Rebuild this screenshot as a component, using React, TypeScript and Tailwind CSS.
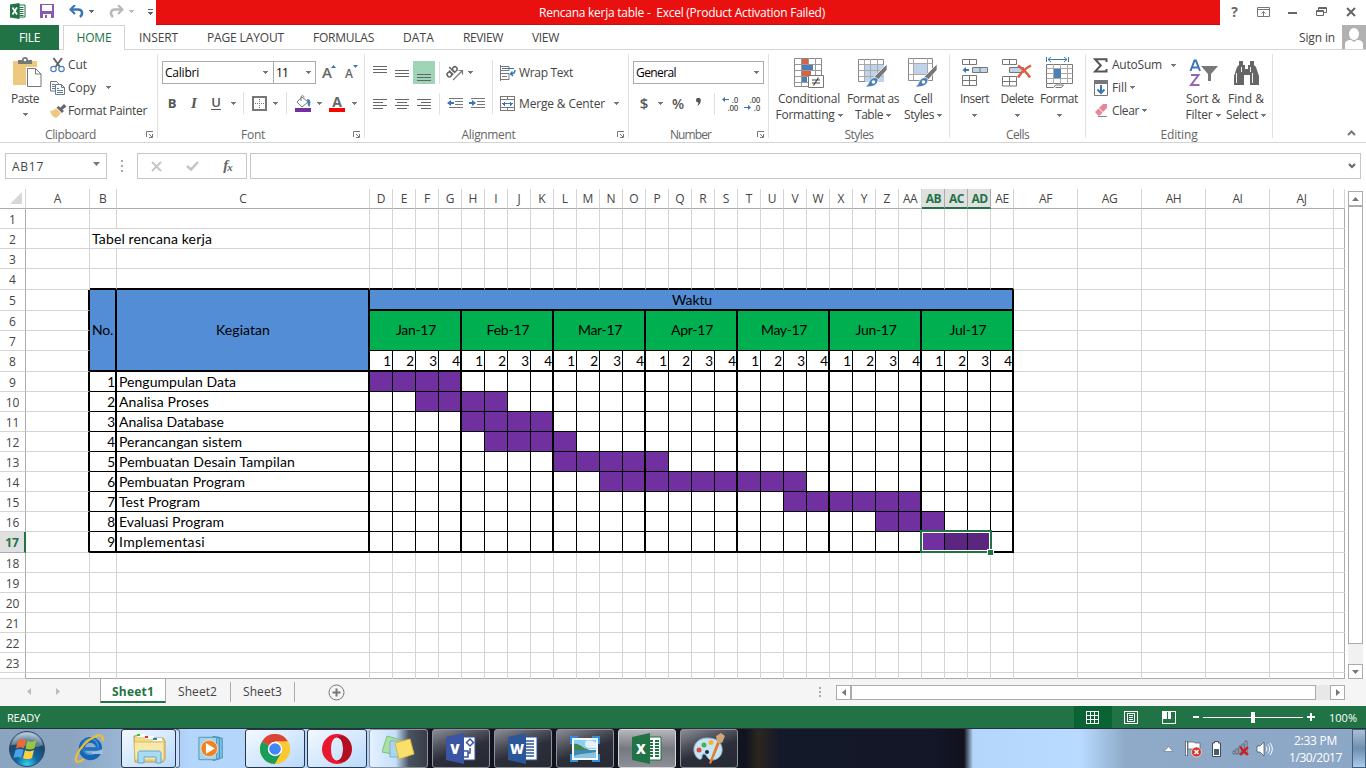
import React, { useLayoutEffect, useRef } from "react";

/* ---------- helpers ---------- */

function Fit({ w, children, className = "" }: { w: number; children: string; className?: string }) {
  const ref = useRef<HTMLSpanElement>(null);
  useLayoutEffect(() => {
    const el = ref.current;
    if (!el) return;
    el.style.letterSpacing = "0px";
    const natural = el.getBoundingClientRect().width;
    el.style.letterSpacing = `${(w - natural) / children.length}px`;
  }, [w, children]);
  return (
    <span ref={ref} className={`inline-block whitespace-pre ${className}`}>
      {children}
    </span>
  );
}

const Arrow = ({ className = "text-[#777]" }: { className?: string }) => (
  <svg width="5" height="3" viewBox="0 0 5 3" className={`shrink-0 ${className}`} shapeRendering="crispEdges">
    <path d="M0 0h5v1h-1v1h-1v1h-1v-1h-1v-1h-1z" fill="currentColor" />
  </svg>
);

const Slot = ({ className, children }: { className: string; children?: React.ReactNode }) => (
  <div className={`flex h-full shrink-0 items-center justify-center ${className}`}>{children}</div>
);

const Sep = ({ className = "h-[22px]" }: { className?: string }) => <div className={`w-px bg-[#e1e1e1] ${className}`} />;

const Launcher = () => (
  <svg width="8" height="7" viewBox="0 0 8 7" className="mr-[3px] shrink-0" fill="none" stroke="#777">
    <path d="M.5 6V.5H7M3 3l3 3M6.5 3v3.5H3" />
  </svg>
);

function Group({ width, label, lw, launcher, children }: { width: string; label: string; lw: number; launcher?: boolean; children: React.ReactNode }) {
  return (
    <div className={`flex h-[84px] shrink-0 flex-col border-r border-[#e1e1e1] ${width}`}>
      <div className="h-[72px] shrink-0">{children}</div>
      <div className="flex h-[16px] shrink-0 items-center text-[#666]">
        <div className={`flex flex-1 justify-center pt-px ${launcher ? "pr-[5px]" : ""}`}>
          <Fit w={lw}>{label}</Fit>
        </div>
        {launcher && <Launcher />}
      </div>
    </div>
  );
}

function Big({ width, icon, a, aw, b, bw }: { width: string; icon: React.ReactNode; a: string; aw: number; b?: string; bw?: number }) {
  return (
    <div className={`flex flex-col items-center ${width}`}>
      <div className="flex h-[37px] items-center">{icon}</div>
      <div className="flex h-4 items-center">
        <Fit w={aw}>{a}</Fit>
      </div>
      <div className="flex h-4 items-center gap-[3px]">
        {b && <Fit w={bw || 0}>{b}</Fit>}
        <Arrow />
      </div>
    </div>
  );
}

/* ---------- ribbon icons ---------- */

const lines = (ys: [number, number, number][]) => (
  <svg width="14" height="14" viewBox="0 0 14 14" fill="#666" shapeRendering="crispEdges">
    {ys.map(([x, y, w]) => (
      <rect key={y} x={x} y={y} width={w} height="1" />
    ))}
  </svg>
);

const ExcelLogo = () => (
  <svg width="16" height="16" viewBox="0 0 16 16">
    <path d="M9 2h6v12H9z" fill="#fff" stroke="#217346" />
    <path d="M9.500 4.500h4M9.500 6.500h4M9.500 8.500h4M9.500 10.500h4M9.500 12.500h4" stroke="#217346" strokeWidth="1" />
    <path d="M0 1.500 9.500 0v16L0 14.500z" fill="#217346" />
    <path d="m2.500 4.500 4.500 7M7 4.500l-4.500 7" stroke="#fff" strokeWidth="1.700" />
  </svg>
);

const PasteIcon = () => (
  <svg width="29" height="31" viewBox="0 0 29 31">
    <path d="M0 4h24v24H0z" fill="#edc87e" />
    <path d="M5 7V3h4a3 3 0 0 1 6 0h4v4z" fill="#777" />
    <circle cx="12" cy="3" r="1.300" fill="#fff" />
    <path d="M14.500 11.500h8l5.500 5.500v12.500H14.500z" fill="#fff" stroke="#fff" strokeWidth="3" />
    <path d="M14.500 11.500h8l5.500 5.500v12.500H14.500z" fill="#fff" stroke="#777" />
    <path d="M22.500 11.500v5.500H28" fill="none" stroke="#777" />
  </svg>
);

const CutIcon = () => (
  <svg width="16" height="16" viewBox="0 0 16 16" fill="none">
    <path d="M3.500 1 10 10M12 1 5.500 10" stroke="#666" strokeWidth="2" />
    <circle cx="3.500" cy="12" r="2.700" stroke="#4a7fb8" strokeWidth="1.200" />
    <circle cx="11.500" cy="12" r="2.700" stroke="#4a7fb8" strokeWidth="1.200" />
  </svg>
);

const CopyIcon = () => (
  <svg width="16" height="16" viewBox="0 0 16 16" fill="#fff" stroke="#777">
    <path d="M.5 1.500h6l2 2V11H.5z" />
    <path d="M2 4.500h3M2 6.500h3M2 8.500h3" stroke="#4a7fb8" />
    <path d="M5.500 4.500h6l3 3v7h-9z" />
    <path d="M11.500 4.500v3h3" fill="none" />
    <path d="M7 8.500h2M7 10.500h6M7 12.500h6" stroke="#4a7fb8" />
  </svg>
);

const PainterIcon = () => (
  <svg width="17" height="14" viewBox="0 0 17 14">
    <path d="M0 7c3 0 5-2 6-3l5 5c-2 2-3 4-5 5-3-1-5-3-6-7z" fill="#edc87e" />
    <path d="m6.500 3.500 2-1.500 5.500 5-2 2z" fill="#666" />
    <path d="m10 4 4-4 2.500 2.500L12 6z" fill="#666" />
  </svg>
);

const BorderIcon = () => (
  <svg width="15" height="15" viewBox="0 0 15 15" fill="none" shapeRendering="crispEdges">
    <rect x="1" y="1" width="13" height="13" stroke="#777" strokeWidth="2" />
    <path d="M7.500 3v10M3 7.500h10" stroke="#777" strokeDasharray="1 1" />
  </svg>
);

const BucketIcon = () => (
  <svg width="17" height="17" viewBox="0 0 17 17">
    <path d="M7 2 2 7l5 5 6-5z" fill="#fff" stroke="#777" />
    <path d="M6 6V2.500C6 0 9 0 9 2.500" fill="none" stroke="#777" />
    <path d="M12 4c4 0 4 3 2.500 8-2-1-2-4-2.500-8z" fill="#4a7fb8" />
    <path d="M0 13h16v4H0z" fill="#7030a0" />
  </svg>
);

const FontColor = () => (
  <div className="flex flex-col items-center">
    <span className="h-[13px] text-[14px] font-bold leading-[14px] text-[#666]">A</span>
    <div className="h-1 w-4 bg-[#ff0000]" />
  </div>
);

const OrientIcon = () => (
  <svg width="17" height="16" viewBox="0 0 17 16" overflow="visible">
    <g transform="rotate(-45 5 9)" fill="none" stroke="#666" strokeWidth="1.500">
      <circle cx="2.800" cy="7.500" r="2.300" />
      <path d="M5.300 4.500v6" />
      <circle cx="10.500" cy="7.500" r="2.300" />
      <path d="M8 2v8.500" />
    </g>
    <path d="m6 15 9-9M15.500 9.500v-4h-4" fill="none" stroke="#777" strokeWidth="1.200" />
  </svg>
);

const IndentIcon = ({ right }: { right?: boolean }) => (
  <svg width="16" height="12" viewBox="0 0 16 12">
    <path d="M2 .5h14M8 3.500h8M8 6.500h8M2 9.500h14" stroke="#777" shapeRendering="crispEdges" />
    {right ? <path d="M0 4h3V2l4 3-4 3V6H0z" fill="#3a76b5" /> : <path d="M7 4H4V2L0 5l4 3V6h3z" fill="#3a76b5" />}
  </svg>
);

const WrapIcon = () => (
  <svg width="16" height="16" viewBox="0 0 16 16" fill="none">
    <path d="M.5 0v16" stroke="#777" />
    <path d="M0 1.500h9M0 5.500h9v-4M0 8.500h9v6H0M2 11.500h5" stroke="#777" />
    <path d="M2 3.500h12" stroke="#3a76b5" />
    <path d="M15 5c0 3-1 4-4 4M12.500 6.500 10.500 9l2.500 2" stroke="#3a76b5" strokeWidth="1.500" />
  </svg>
);

const MergeIcon = () => (
  <svg width="15" height="15" viewBox="0 0 15 15" fill="none" shapeRendering="crispEdges">
    <path d="M.5 .5h14v14H.5zM0 3.500h15M0 11.500h15M7.500 0v4M7.500 11v4" stroke="#777" />
    <path d="M2 7.500h11M4.500 5.500v4M10.500 5.500v4M3.500 6.500v2M11.500 6.500v2" stroke="#3a76b5" />
  </svg>
);

const DecimalIcon = ({ inc }: { inc?: boolean }) => (
  <div className="flex h-[16px] w-4 flex-col text-[8px] font-semibold leading-[8px] tracking-[-0.300px] text-[#555]">
    {inc ? (
      <>
        <div className="flex items-center justify-between">
          <svg width="7" height="5" viewBox="0 0 7 5"><path d="M7 2H3V0L0 2.500 3 5V3h4z" fill="#3a76b5" /></svg>
          <span>.0</span>
        </div>
        <span className="text-right">.00</span>
      </>
    ) : (
      <>
        <span className="text-right">.00</span>
        <div className="flex items-center justify-between">
          <svg width="7" height="5" viewBox="0 0 7 5"><path d="M0 2h4V0l3 2.500L4 5V3H0z" fill="#3a76b5" /></svg>
          <span>.0</span>
        </div>
      </>
    )}
  </div>
);

const CondIcon = () => (
  <svg width="30" height="30" viewBox="0 0 30 30">
    <path d="M.5 .5h27v28H.5z" fill="#fff" stroke="#888" />
    <path d="M.5 6.500h27M.5 12.500h27M.5 18.500h27M.5 24.500h27M7.500 0v29M14.500 0v29M21.500 0v29" stroke="#999" />
    <path d="M8 1h6v5H8zM8 13h9v5H8z" fill="#d9623f" />
    <path d="M8 7h11v5H8zM8 19h5v5H8z" fill="#4a7fb8" />
    <path d="M14.500 17.500h15v12h-15z" fill="#fff" stroke="#777" />
    <path d="M18 22h8M18 25h8M24.500 19.500l-5 8" stroke="#444" strokeWidth="1.200" />
  </svg>
);

const Brush = () => (
  <g>
    <path d="M29 6v6l-9 10-4-3z" fill="#777" stroke="#fff" strokeWidth=".7" />
    <path d="M20 21c0 6-4 8-13 8 4-2 3-5 6-8 3-2 5-2 7 0z" fill="#4a7fb8" stroke="#fff" strokeWidth=".7" />
    <circle cx="15.500" cy="24" r="1.800" fill="#fff" />
  </g>
);

const TableStyleIcon = () => (
  <svg width="30" height="30" viewBox="0 0 30 30">
    <path d="M.5 1.500h25v22H.5z" fill="#fff" stroke="#888" />
    <path d="M7 7h19v17H7z" fill="#bfd3ea" />
    <path d="M.5 6.500h25M.5 12.500h25M.5 18.500h25M6.500 1v22M12.500 1v22M19.500 1v22" stroke="#aaa" />
    <Brush />
  </svg>
);

const CellStyleIcon = () => (
  <svg width="30" height="30" viewBox="0 0 30 30">
    <path d="M.5 .5h24v22H.5z" fill="#fff" stroke="#888" />
    <path d="M.5 5.500h24M.5 16.500h24M5.500 0v22M19.500 0v22" stroke="#aaa" />
    <path d="M6 6h13v10H6z" fill="#bfd3ea" />
    <Brush />
  </svg>
);

const InsertIcon = () => (
  <svg width="27" height="28" viewBox="0 0 27 28" stroke="#777" fill="#fff">
    <path d="M1.500 .5h14v5h-14zM8.500 .5v5M1.500 16.500h14v10h-14zM8.500 16.500v10M1.500 21.500h14" />
    <path d="M11.500 8.500h15v5h-15zM19 8.500v5" fill="#bfd3ea" />
    <path d="M8 10H5V8l-3.500 3L5 14v-2h3z" fill="#3a76b5" stroke="none" />
  </svg>
);

const DeleteIcon = () => (
  <svg width="30" height="28" viewBox="0 0 30 28" stroke="#777" fill="#fff">
    <path d="M.5 .5h14v5H.5zM7.500 .5v5M.5 17.500h14v9.500H.5zM7.500 17.500v9.500M.5 22.500h14" />
    <path d="M7.500 8.500h14v5h-14z" fill="#bfd3ea" />
    <path d="M16 6.500c4 3 9 7 12 12M29 6.500c-6 3-10 7-13 12" stroke="#dc5f42" strokeWidth="2.500" fill="none" />
  </svg>
);

const FormatIcon = () => (
  <svg width="29" height="31" viewBox="0 0 29 31" fill="none">
    <path d="M1.500 0v5M23.500 0v5M3 2.500h19M6 0 3 2.500 6 5M19 0l3 2.500L19 5" stroke="#3a76b5" />
    <path d="M1.500 7.500h26v19h-26z" fill="#fff" stroke="#777" />
    <path d="M1.500 11.500h26M1.500 21.500h26M8.500 7v20M15.500 7v20M22.500 7v20M1.500 16.500h26" stroke="#aaa" />
    <path d="M9 12h7v9H9z" fill="#4a7fb8" />
    <path d="M1.500 27v3.500h7l2-2.500h8v0l-2 2.500h-6" stroke="#777" />
  </svg>
);

const SigmaIcon = () => (
  <svg width="15" height="15" viewBox="0 0 15 15" fill="none">
    <path d="M13.500 4V1.200H2L7.800 7.500 2 13.500h11.500V11" stroke="#555" strokeWidth="2" />
  </svg>
);

const FillIcon = () => (
  <svg width="14" height="16" viewBox="0 0 14 16" fill="none">
    <path d="M.5 .5h13v15H.5z" fill="#fff" stroke="#777" />
    <path d="M0 0h14v4H0z" fill="#777" />
    <path d="M7 5v8M3.500 9.500 7 13l3.500-3.500" stroke="#3a76b5" strokeWidth="2" />
  </svg>
);

const EraserIcon = () => (
  <svg width="15" height="13" viewBox="0 0 15 13">
    <path d="m5 4 4-4h4v4L9 8z" fill="#e8869a" />
    <path d="m1 8 3.500-3.500 4 4L6 11.500H4z" fill="#e8869a" />
    <path d="M4 12.500h9" stroke="#888" />
  </svg>
);

const SortIcon = () => (
  <svg width="29" height="28" viewBox="0 0 29 28">
    <path d="m1.500 12 4-10.500h1.400L11 12M3 8.500h6.500" fill="none" stroke="#3a76b5" strokeWidth="2" />
    <path d="M2 16h7.500L2 26h8.500" fill="none" stroke="#9463b8" strokeWidth="2" />
    <path d="M12 7h17l-7 8v7h-3v-7z" fill="#777" />
  </svg>
);

const BinocularIcon = () => (
  <svg width="27" height="24" viewBox="0 0 27 24" fill="#666">
    <path d="M6 0h4v4h2v4h3V4h2V0h4v4l2 2 3 9v9h-9V14h-6v10H1v-9l3-9 2-2z" />
    <path d="M3.500 12v10M19.500 12v10M8.500 6v5M17.500 6v5" stroke="#fff" strokeWidth=".9" />
  </svg>
);

/* ---------- top area ---------- */

function TitleBar() {
  return (
    <div className="flex h-[25px] bg-white">
      <div className="flex h-[22px] w-[156px] items-center">
        <Slot className="ml-[9px] w-[18px]"><ExcelLogo /></Slot>
        <Slot className="ml-[12px] w-[16px]">
          <svg width="14" height="14" viewBox="0 0 14 14">
            <path d="M0 0h14v14H0z" fill="#8a59b0" />
            <path d="M2 1h10v6H2zM3 10h8v4H3z" fill="#fff" />
            <path d="M5 11h2v3H5z" fill="#8a59b0" />
          </svg>
        </Slot>
        <Slot className="ml-[13px] w-[16px]">
          <svg width="15" height="13" viewBox="0 0 15 13" fill="none" stroke="#3a76b5">
            <path d="M2 4.500h7c5 0 5 5 2 7.500" strokeWidth="2.500" />
            <path d="M6 0 1.500 4.500 6 9" strokeWidth="2.200" />
          </svg>
        </Slot>
        <Slot className="ml-[4px] w-[6px]"><Arrow className="text-[#666]" /></Slot>
        <Slot className="ml-[14px] w-[16px]">
          <svg width="15" height="13" viewBox="0 0 15 13" fill="none" stroke="#b8b8b8">
            <path d="M13 4.500H6c-5 0-5 5-2 7.500" strokeWidth="2.500" />
            <path d="m9 0 4.500 4.500L9 9" strokeWidth="2.200" />
          </svg>
        </Slot>
        <Slot className="ml-[4px] w-[6px]"><Arrow className="text-[#bbb]" /></Slot>
        <Slot className="ml-[12px] w-[8px] flex-col gap-[2px] pt-[2px]">
          <div className="h-px w-[5px] bg-[#666]" />
          <Arrow className="text-[#666]" />
        </Slot>
      </div>
      <div className="flex h-[25px] w-[1064px] items-center justify-center border-b border-[#c40d0d] bg-[#e91010] pr-[12px] pt-[2px] text-white">
        <Fit w={286}>Rencana kerja table -  Excel (Product Activation Failed)</Fit>
      </div>
      <div className="flex h-[23px] flex-1 items-center text-[#666]">
        <Slot className="ml-[8px] w-[13px] text-[14px] font-bold">?</Slot>
        <Slot className="ml-[15px] w-[15px]">
          <svg width="13" height="10" viewBox="0 0 13 10" fill="none" stroke="#777"><path d="M.5 .5h12v9H.5zM0 2.500h13M6.500 9V4.500M4.500 6.500l2-2 2 2" /></svg>
        </Slot>
        <Slot className="ml-[15px] w-[13px] pt-[3px]"><div className="h-[2px] w-[9px] bg-[#666]" /></Slot>
        <Slot className="ml-[16px] w-[13px]">
          <svg width="11" height="9" viewBox="0 0 11 9" fill="none" stroke="#666"><path d="M.5 3.500h7v5h-7zM0 4.500h8M2.500 3V.5h8v5H8M3 1.500h8" /></svg>
        </Slot>
        <Slot className="ml-[16px] w-[13px]">
          <svg width="10" height="10" viewBox="0 0 10 10"><path d="m1 1 8 8M9 1 1 9" stroke="#666" strokeWidth="2" /></svg>
        </Slot>
      </div>
    </div>
  );
}

function Tabs() {
  return (
    <div className="flex h-[25px] text-[#444]">
      <div className="flex w-[59px] items-center justify-center bg-[#217346] pt-px text-white"><Fit w={21}>FILE</Fit></div>
      <div className="w-[4px] border-b border-[#d4d4d4]" />
      <div className="flex w-[62px] items-center justify-center border-x border-t border-[#d4d4d4] text-[#217346]"><Fit w={35}>HOME</Fit></div>
      <div className="flex flex-1 items-center border-b border-[#d4d4d4]">
        <span className="ml-[14px] w-[68px] pt-[2px]"><Fit w={39}>INSERT</Fit></span>
        <span className="w-[106px] pt-[2px]"><Fit w={77}>PAGE LAYOUT</Fit></span>
        <span className="w-[90px] pt-[2px]"><Fit w={61}>FORMULAS</Fit></span>
        <span className="w-[60px] pt-[2px]"><Fit w={31}>DATA</Fit></span>
        <span className="w-[69px] pt-[2px]"><Fit w={40}>REVIEW</Fit></span>
        <span className="w-[767px] pt-[2px]"><Fit w={27}>VIEW</Fit></span>
        <span className="pt-px"><Fit w={36}>Sign in</Fit></span>
        <svg width="24" height="24" viewBox="0 0 24 24" className="ml-auto">
          <path d="M0 0h24v24H0z" fill="#b1b1b1" />
          <ellipse cx="12" cy="9" rx="5" ry="6" fill="#fff" />
          <path d="M3 24v-5c0-3 3-4 6-4l3 2 3-2c3 0 6 1 6 4v5z" fill="#fff" />
        </svg>
      </div>
    </div>
  );
}

function Ribbon() {
  return (
    <div className="flex h-[93px] border-b border-[#d4d4d4] pt-1 text-[#444]">
      <Group width="w-[158px]" label="Clipboard" lw={51} launcher>
        <div className="flex">
          <div className="flex w-[50px] flex-col items-center">
            <div className="ml-[5px] flex h-[37px] items-center"><PasteIcon /></div>
            <div className="flex h-4 items-center"><Fit w={28}>Paste</Fit></div>
            <div className="flex h-[14px] items-center"><Arrow /></div>
          </div>
          <div className="-mt-px flex flex-col">
            {[
              [<CutIcon key="i" />, "Cut", 19],
              [<CopyIcon key="i" />, "Copy", 28],
              [<PainterIcon key="i" />, "Format Painter", 79],
            ].map(([icon, t, w]) => (
              <div key={t as string} className="flex h-[23px] items-center">
                <div className="flex w-[18px]">{icon as React.ReactNode}</div>
                <Fit w={w as number}>{t as string}</Fit>
                {t === "Copy" && <Arrow className="ml-[10px] text-[#777]" />}
              </div>
            ))}
          </div>
        </div>
      </Group>

      <Group width="w-[207px]" label="Font" lw={24} launcher>
        <div className="flex h-[30px] items-end pl-1">
          <div className="flex h-[23px] w-[112px] items-center justify-between border border-[#ababab] pl-[2px] pr-[5px] text-black"><Fit w={34}>Calibri</Fit><Arrow /></div>
          <div className="-ml-px flex h-[23px] w-[43px] items-center justify-between border border-[#ababab] pl-[2px] pr-[4px] text-black"><Fit w={12}>11</Fit><Arrow /></div>
          <div className="ml-[6px] flex h-[23px] items-center text-[15px] font-semibold text-[#666]">A<svg width="5" height="3" className="-ml-px -mt-3"><path d="M0 3 2.500 0 5 3z" fill="#3a76b5" /></svg></div>
          <div className="ml-[9px] flex h-[23px] items-center text-[12px] font-semibold text-[#666]"><span className="pt-[2px]">A</span><svg width="5" height="3" className="-mt-3"><path d="M0 0h5L2.500 3z" fill="#3a76b5" /></svg></div>
        </div>
        <div className="mt-[7px] flex h-6 items-center pl-[2px] text-[#555]">
          <Slot className="w-6 text-[13px] font-bold">B</Slot>
          <Slot className="w-5 font-['Liberation_Serif'] text-[15px] font-bold italic">I</Slot>
          <Slot className="w-6 text-[13px] font-semibold"><span className="border-b border-[#555] leading-[13px]">U</span></Slot>
          <Slot className="w-[11px]"><Arrow /></Slot>
          <Slot className="w-[9px]"><Sep /></Slot>
          <Slot className="w-[22px]"><BorderIcon /></Slot>
          <Slot className="w-[11px]"><Arrow /></Slot>
          <Slot className="w-[11px]"><Sep /></Slot>
          <Slot className="w-[22px]"><BucketIcon /></Slot>
          <Slot className="w-[10px]"><Arrow /></Slot>
          <Slot className="w-[26px]"><FontColor /></Slot>
          <Slot className="w-[8px]"><Arrow /></Slot>
        </div>
      </Group>

      <Group width="w-[264px]" label="Alignment" lw={54} launcher>
        <div className="flex">
          <div className="pl-1">
            <div className="mt-[7px] flex h-[23px] items-center">
              <Slot className="w-[22px]">{lines([[0, 0, 14], [0, 3, 14], [0, 6, 14]])}</Slot>
              <Slot className="w-[22px]">{lines([[0, 4, 14], [0, 7, 14], [0, 10, 14]])}</Slot>
              <Slot className="w-[22px] bg-[#9fd5b7]"><div className="pt-[5px]">{lines([[0, 6, 14], [0, 9, 14], [0, 12, 14]])}</div></Slot>
              <Slot className="w-[8px]"><Sep /></Slot>
              <Slot className="w-[24px]"><OrientIcon /></Slot>
              <Slot className="w-[6px]"><Arrow /></Slot>
            </div>
            <div className="mt-[8px] flex h-[23px] items-center">
              <Slot className="w-[22px]">{lines([[0, 2, 14], [0, 5, 10], [0, 8, 14], [0, 11, 10]])}</Slot>
              <Slot className="w-[22px]">{lines([[0, 2, 14], [2, 5, 10], [0, 8, 14], [2, 11, 10]])}</Slot>
              <Slot className="w-[22px]">{lines([[0, 2, 14], [4, 5, 10], [0, 8, 14], [4, 11, 10]])}</Slot>
              <Slot className="w-[8px]"><Sep /></Slot>
              <Slot className="w-[24px]"><IndentIcon /></Slot>
              <Slot className="w-[20px]"><IndentIcon right /></Slot>
            </div>
          </div>
          <Sep className="ml-[5px] mt-[6px] h-[54px]" />
          <div className="ml-[7px]">
            <div className="mt-[7px] flex h-[23px] items-center"><div className="w-[19px]"><WrapIcon /></div><Fit w={54}>Wrap Text</Fit></div>
            <div className="mt-[8px] flex h-[23px] items-center"><div className="w-[19px]"><MergeIcon /></div><Fit w={86}>Merge &amp; Center</Fit><Arrow className="ml-[9px] text-[#777]" /></div>
          </div>
        </div>
      </Group>

      <Group width="w-[140px]" label="Number" lw={41} launcher>
        <div className="ml-[4px] mt-[7px] flex h-[23px] w-[131px] items-center justify-between border border-[#ababab] pl-[2px] pr-[4px] text-black"><Fit w={40}>General</Fit><Arrow /></div>
        <div className="mt-[8px] flex h-[23px] items-center pl-[5px] text-[#555]">
          <Slot className="w-[20px] text-[15px] font-semibold">$</Slot>
          <Slot className="w-[12px]"><Arrow /></Slot>
          <Slot className="w-[24px] text-[14px] font-semibold">%</Slot>
          <Slot className="w-[17px] pb-1">
            <svg width="5" height="8" viewBox="0 0 5 8"><path d="M0 2.200a2.300 2.300 0 0 1 4.800 0C4.800 5 3.500 7 1 8c1-1.500 1.500-2.500 1.300-3.500A2.300 2.300 0 0 1 0 2.200z" fill="#555" /></svg>
          </Slot>
          <Slot className="w-[15px]"><Sep /></Slot>
          <Slot className="w-[16px]"><DecimalIcon inc /></Slot>
          <Slot className="ml-[6px] w-[16px]"><DecimalIcon /></Slot>
        </div>
      </Group>

      <Group width="w-[181px]" label="Styles" lw={29}>
        <div className="flex">
          <Big width="w-[80px]" icon={<CondIcon />} a="Conditional" aw={62} b="Formatting" bw={59} />
          <Big width="w-[48px]" icon={<TableStyleIcon />} a="Format as" aw={52} b="Table" bw={28} />
          <Big width="w-[52px]" icon={<CellStyleIcon />} a="Cell" aw={19} b="Styles" bw={30} />
        </div>
      </Group>

      <Group width="w-[136px]" label="Cells" lw={23}>
        <div className="flex pl-[3px]">
          <Big width="w-[43px]" icon={<InsertIcon />} a="Insert" aw={29} />
          <Big width="w-[42px]" icon={<DeleteIcon />} a="Delete" aw={33} />
          <Big width="w-[42px]" icon={<FormatIcon />} a="Format" aw={38} />
        </div>
      </Group>

      <Group width="w-[187px]" label="Editing" lw={37}>
        <div className="flex">
          <div className="w-[95px] pl-[7px]">
            <div className="flex h-[22px] items-center"><div className="w-[19px]"><SigmaIcon /></div><Fit w={50}>AutoSum</Fit><Arrow className="ml-[9px] text-[#777]" /></div>
            <div className="flex h-[23px] items-center pl-px"><div className="w-[18px]"><FillIcon /></div><Fit w={15}>Fill</Fit><Arrow className="ml-[3px] text-[#777]" /></div>
            <div className="flex h-[23px] items-center pl-px"><div className="w-[18px]"><EraserIcon /></div><Fit w={27}>Clear</Fit><Arrow className="ml-[3px] text-[#777]" /></div>
          </div>
          <Big width="w-[44px]" icon={<SortIcon />} a="Sort &amp;" aw={34} b="Filter" bw={27} />
          <Big width="w-[42px]" icon={<BinocularIcon />} a="Find &amp;" aw={36} b="Select" bw={32} />
        </div>
      </Group>
      <div className="flex flex-1 items-end justify-end pb-[6px] pr-[10px]">
        <svg width="9" height="6" viewBox="0 0 9 6"><path d="m1 5 3.500-3.500L8 5" fill="none" stroke="#777" strokeWidth="2" /></svg>
      </div>
    </div>
  );
}

function FormulaBar() {
  return (
    <div className="flex h-[46px] px-[5px] pt-[10px]">
      <div className="flex h-[26px] w-[102px] items-center justify-between border border-[#c6c6c6] pl-[6px] pr-[6px] text-[#444]">
        <span className="pt-[2px]"><Fit w={32}>AB17</Fit></span>
        <svg width="7" height="4" viewBox="0 0 7 4" className="-mt-1"><path d="M0 0h7L3.500 4z" fill="#777" /></svg>
      </div>
      <div className="flex w-[30px] flex-col items-center gap-[3px] pt-[7px]">
        <i className="h-[2px] w-[2px] bg-[#aaa]" /><i className="h-[2px] w-[2px] bg-[#aaa]" /><i className="h-[2px] w-[2px] bg-[#aaa]" />
      </div>
      <div className="flex h-[26px] w-[110px] items-center border border-[#c6c6c6]">
        <Slot className="w-[36px]"><svg width="11" height="11" viewBox="0 0 11 11"><path d="m1 1 9 9M10 1l-9 9" stroke="#c4c4c4" strokeWidth="1.800" /></svg></Slot>
        <Slot className="w-[36px]"><svg width="13" height="10" viewBox="0 0 13 10"><path d="m1 5 4 3.500L12 1" fill="none" stroke="#c4c4c4" strokeWidth="2.500" /></svg></Slot>
        <Slot className="w-[36px] pb-[2px] font-['Liberation_Serif'] text-[15px] font-bold italic text-[#666]">f<span className="-ml-px pt-[4px] text-[11px]">x</span></Slot>
      </div>
      <div className="ml-[3px] flex h-[26px] flex-1 items-center justify-end border border-[#c6c6c6] pr-[4px]">
        <svg width="8" height="6" viewBox="0 0 8 6"><path d="m1 1 3 3 3-3" fill="none" stroke="#666" strokeWidth="2" /></svg>
      </div>
    </div>
  );
}

/* ---------- worksheet ---------- */

const COLS = ["A", "B", "C", "D", "E", "F", "G", "H", "I", "J", "K", "L", "M", "N", "O", "P", "Q", "R", "S", "T", "U", "V", "W", "X", "Y", "Z", "AA", "AB", "AC", "AD", "AE", "AF", "AG", "AH", "AI", "AJ", ""];
const MONTHS = ["Jan-17", "Feb-17", "Mar-17", "Apr-17", "May-17", "Jun-17", "Jul-17"];
const MONTH_WIDTHS = [40, 43, 44, 42, 46, 41, 37];
const TASKS: [string, number, number, number][] = [
  ["Pengumpulan Data", 117, 0, 4],
  ["Analisa Proses", 90, 2, 6],
  ["Analisa Database", 105, 4, 8],
  ["Perancangan sistem", 123, 5, 9],
  ["Pembuatan Desain Tampilan", 176, 8, 13],
  ["Pembuatan Program", 126, 10, 19],
  ["Test Program", 81, 18, 24],
  ["Evaluasi Program", 105, 22, 25],
  ["Implementasi", 86, 24, 27],
];
const WEEKS = Array.from({ length: 28 }, (_, i) => i);

const at = (col: number, row: number, colSpan = 1, rowSpan = 1): React.CSSProperties => ({
  gridColumn: `${col} / span ${colSpan}`,
  gridRow: `${row} / span ${rowSpan}`,
});

const G = "border-b border-r border-[#d4d4d4]";

function Sheet() {
  const blank: React.ReactNode[] = [];
  for (let r = 1; r <= 24; r++) {
    for (let c = 1; c <= 37; c++) {
      const inTable = r >= 5 && r <= 17 && c >= 2 && c <= 31;
      if (inTable || (r === 2 && (c === 2 || c === 3))) continue;
      let cls = G;
      if (r === 4 && c >= 2 && c <= 31) cls = "border-b-2 border-r border-r-[#d4d4d4] border-b-black";
      if (c === 1 && r >= 5 && r <= 17) cls = "border-b border-r-2 border-r-black border-b-[#d4d4d4]";
      if (r === 24) cls = "border-r border-[#d4d4d4]";
      if (c === 37) cls = r === 24 ? "" : "border-b border-[#d4d4d4]";
      blank.push(<div key={`${r}-${c}`} style={at(c + 1, r + 1)} className={cls} />);
    }
  }
  return (
    <div className="relative grid h-[490px] w-[1345px] shrink-0 grid-cols-[26px_64px_27px_253px_repeat(28,23px)_repeat(5,64px)_11px] grid-rows-[20px_20px_20px_20px_21px_21px_20px_20px_21px_repeat(8,20px)_21px_repeat(6,20px)_6px] border-b border-r border-[#ababab] font-[Lato,'Noto_Sans',sans-serif] text-[14px] text-black">
      <div style={at(1, 1)} className="flex items-end justify-end border-b border-r border-b-[#ababab] border-r-[#d4d4d4] pb-[4px] pr-[3px]">
        <svg width="12" height="12"><path d="M12 0v12H0z" fill="#d8d8d8" /></svg>
      </div>
      {COLS.map((c, i) => {
        const sel = i >= 27 && i <= 29;
        return (
          <div
            key={i}
            style={at(i + 2, 1)}
            className={`flex items-center justify-center font-['Open_Sans'] text-[12px] ${sel ? "border-b-2 border-r border-b-[#217346] border-r-[#ababab] bg-[#e0e0e0] pl-px pt-px font-bold text-[#217346]" : "border-b border-r border-b-[#ababab] border-r-[#d4d4d4] text-[#444]"} ${c.length > 1 ? "tracking-[-0.500px]" : ""}`}
          >
            {c}
          </div>
        );
      })}
      {Array.from({ length: 24 }, (_, i) => (
        <div
          key={i}
          style={at(1, i + 2)}
          className={`flex items-center justify-center overflow-hidden border-b pt-[2px] font-['Open_Sans'] text-[12px] ${i === 16 ? "border-r-2 border-b-[#ababab] border-r-[#217346] bg-[#e0e0e0] font-bold text-[#217346]" : "border-r border-b-[#d4d4d4] border-r-[#ababab] text-[#444]"}`}
        >
          {i < 23 ? i + 1 : ""}
        </div>
      ))}
      {blank}
      <div style={at(3, 3, 2)} className={`${G} flex items-center pl-[2px] pt-px`}><Fit w={120}>Tabel rencana kerja</Fit></div>
      <div style={at(3, 6, 1, 4)} className="flex items-center justify-center border-b-2 border-r-2 border-black bg-[#538dd5]"><Fit w={21}>No.</Fit></div>
      <div style={at(4, 6, 1, 4)} className="flex items-center justify-center border-b-2 border-r-2 border-black bg-[#538dd5] pl-px"><Fit w={54}>Kegiatan</Fit></div>
      <div style={at(5, 6, 28)} className="flex items-center justify-center border-b-2 border-r-2 border-black bg-[#538dd5] pl-[2px] pt-px"><Fit w={40}>Waktu</Fit></div>
      {MONTHS.map((m, i) => (
        <div key={m} style={at(5 + i * 4, 7, 4, 2)} className="flex items-center justify-center border-b border-r-2 border-black bg-[#00b050] pb-px pl-[2px]"><Fit w={MONTH_WIDTHS[i]}>{m}</Fit></div>
      ))}
      {WEEKS.map((w) => (
        <div key={w} style={at(5 + w, 9)} className={`flex items-center justify-end border-b-2 border-black pt-[3px] text-[13.500px] ${w % 4 === 3 ? "border-r-2" : "border-r pr-px"}`}>{(w % 4) + 1}</div>
      ))}
      {TASKS.map(([name, width, from, to], t) => {
        const last = t === TASKS.length - 1;
        const bottom = last ? "border-b-2" : "border-b";
        return (
          <React.Fragment key={name}>
            <div style={at(3, 10 + t)} className={`flex items-center justify-end border-r-2 border-black pt-[2px] text-[13.500px] ${bottom}`}>{t + 1}</div>
            <div style={at(4, 10 + t)} className={`flex items-center border-r-2 border-black pl-[2px] ${bottom}`}><Fit w={width}>{name}</Fit></div>
            {WEEKS.map((w) => {
              const filled = w >= from && w < to;
              const bg = filled ? (last && w > from ? "bg-[#5a267f]" : "bg-[#7030a0]") : "";
              return <div key={w} style={at(5 + w, 10 + t)} className={`border-black ${w % 4 === 3 ? "border-r-2" : "border-r"} ${bottom} ${bg}`} />;
            })}
          </React.Fragment>
        );
      })}
      <div className="pointer-events-none absolute left-[920px] top-[341px] h-[23px] w-[72px] border-2 border-[#217346]">
        <div className="h-full w-full border border-white" />
      </div>
      <div className="absolute left-[987px] top-[360px] h-[7px] w-[7px] border border-white bg-[#217346]" />
    </div>
  );
}

function VScroll() {
  return (
    <div className="ml-[3px] mt-[2px] flex h-[488px] w-[15px] flex-col">
      <div className="flex h-[15px] items-center justify-center border border-[#ababab]"><svg width="7" height="4"><path d="M0 4 3.500 0 7 4z" fill="#777" /></svg></div>
      <div className="h-[438px] border border-[#ababab]" />
      <div className="h-[20px] bg-[#f1f1f1]" />
      <div className="flex h-[15px] items-center justify-center border border-[#ababab] bg-white"><svg width="7" height="4"><path d="M0 0h7L3.500 4z" fill="#777" /></svg></div>
    </div>
  );
}

function SheetTabs() {
  return (
    <div className="flex h-[27px] bg-[#f5f5f5] text-[#444]">
      <div className="flex h-[25px] w-[100px] items-center pl-[27px]">
        <svg width="34" height="7" viewBox="0 0 34 7" fill="#bbb"><path d="M4 0v7L0 3.500zM29 0v7l4-3.500z" /></svg>
      </div>
      <div className="flex h-[24px] w-[66px] items-center justify-center border-x border-b-2 border-x-[#ababab] border-b-[#217346] bg-white pt-[3px] font-bold text-[#217346]"><Fit w={42}>Sheet1</Fit></div>
      <div className="my-[3px] flex h-[20px] w-[65px] items-center justify-center border-r border-[#ababab] pr-px"><Fit w={39}>Sheet2</Fit></div>
      <div className="my-[3px] flex h-[20px] w-[64px] items-center justify-center border-r border-[#ababab]"><Fit w={39}>Sheet3</Fit></div>
      <svg width="17" height="17" viewBox="0 0 17 17" fill="none" stroke="#777" className="ml-[33px] mt-[5px]">
        <circle cx="8.500" cy="8.500" r="7.500" />
        <path d="M8.500 4.500v8M4.500 8.500h8" strokeWidth="2" />
      </svg>
      <div className="ml-[474px] mt-[8px] flex w-[2px] flex-col gap-[2px]">
        <i className="h-[2px] bg-[#aaa]" /><i className="h-[2px] bg-[#aaa]" /><i className="h-[2px] bg-[#aaa]" />
      </div>
      <div className="ml-[15px] mt-[6px] flex h-[15px] w-[509px]">
        <div className="flex w-[15px] items-center justify-center border border-[#ababab] bg-white"><svg width="4" height="7"><path d="M4 0v7L0 3.500z" fill="#777" /></svg></div>
        <div className="w-[465px] border border-[#ababab] bg-white" />
        <div className="w-[14px] bg-[#e8e8e8]" />
        <div className="flex w-[15px] items-center justify-center border border-[#ababab] bg-white"><svg width="4" height="7"><path d="M0 0v7l4-3.500z" fill="#777" /></svg></div>
      </div>
    </div>
  );
}

function StatusBar() {
  return (
    <div className="flex h-[22px] items-center bg-[#217346] text-[11px] text-white">
      <div className="w-[1074px] pl-[7px]"><Fit w={33}>READY</Fit></div>
      <Slot className="w-[38px] bg-[#0a6332] pr-px">
        <svg width="13" height="13" viewBox="0 0 13 13" fill="none" stroke="#fff" shapeRendering="crispEdges"><path d="M.5 .5h12v12H.5zM4.500 0v13M8.500 0v13M0 4.500h13M0 8.500h13" /></svg>
      </Slot>
      <Slot className="w-[38px]">
        <svg width="14" height="13" viewBox="0 0 14 13" fill="none" stroke="#fff" shapeRendering="crispEdges"><path d="M.5 .5h13v12H.5zM3.500 2.500h7v8h-7zM5 4.500h4M5 6.500h4M5 8.500h4" /></svg>
      </Slot>
      <Slot className="w-[38px]">
        <svg width="14" height="13" viewBox="0 0 14 13" shapeRendering="crispEdges"><path d="M.5 .5h13v12H.5z" fill="none" stroke="#fff" /><path d="M1 1h4v7H1zM6 1h3v7H6z" fill="#fff" /></svg>
      </Slot>
      <div className="ml-[5px] h-[2px] w-[6px] bg-white" />
      <div className="ml-[4px] flex w-[100px] items-center">
        <div className="h-px w-[48px] bg-white" /><div className="h-[11px] w-[4px] bg-white" /><div className="h-px w-[48px] bg-white" />
      </div>
      <svg width="8" height="8" className="ml-[4px]" shapeRendering="crispEdges"><path d="M3 0h2v3h3v2H5v3H3V5H0V3h3z" fill="#fff" /></svg>
      <div className="ml-[14px]"><Fit w={28}>100%</Fit></div>
    </div>
  );
}

/* ---------- taskbar ---------- */

const LIGHT_BTN = "border-[#27364a] bg-gradient-to-br from-[#f3f9ff] to-[#b9d9fb]";
const DARK_BTN = "border-[#8e929a] bg-[linear-gradient(160deg,#8b8e95_0%,#4a4d56_35%,#2c2f39_55%,#272933_100%)]";

const TaskBtn = ({ cls, children }: { cls: string; children: React.ReactNode }) => (
  <div className={`flex h-[39px] shrink-0 items-center justify-center rounded-[3px] border ${cls}`}>{children}</div>
);

const OfficeIcon = ({ letter, color, kind }: { letter: string; color: string; kind: string }) => (
  <svg width="30" height="31" viewBox="0 0 30 31">
    <path d="M14 4h15v23H14z" fill="#fff" stroke={color} />
    {kind === "visio" && <path d="M18 18h4v6h-4M22 20h2v-5M24 6l3.500 3.500L24 13l-3.500-3.500z" fill="none" stroke={color} strokeWidth="1.500" />}
    {kind === "word" && <path d="M18 8h8M18 11h8M18 14h8M18 17h8M18 20h8M18 23h8" stroke={color} strokeWidth="1.300" />}
    {kind === "excel" && <path d="M18 8h3M23 8h4M18 11h3M23 11h4M18 14h3M23 14h4M18 17h3M23 17h4M18 20h3M23 20h4M18 23h3M23 23h4" stroke={color} strokeWidth="2" />}
    <path d="M0 4 18 0v31L0 27z" fill={color} />
    <text x="9" y="20.500" textAnchor="middle" fontFamily="Open Sans" fontSize="13.500" fontWeight="800" fill="#fff">{letter}</text>
  </svg>
);

function Taskbar() {
  return (
    <div className="flex h-[40px] items-start border-t border-[#26303c] bg-[linear-gradient(90deg,#8ba4c0_0px,#8ba4c0_70px,#a2c0e0_150px,#b4d6fb_190px,#b4d6fb_366px,#8397b0_396px,#11131f_430px,#11131f_745px,#2b261f_758px,#14192a_780px,#131728_930px,#11121c_964px,#b4d6fb_973px,#b9dbff_1080px,#8eaac8_1125px,#8ba7c5_1366px)] text-white">
      <Slot className="w-[54px]">
        <svg width="38" height="38" viewBox="0 0 38 38">
          <defs>
            <radialGradient id="orb" cx=".5" cy=".95" r=".9"><stop offset="0" stopColor="#36d1f5" /><stop offset=".35" stopColor="#12699f" /><stop offset=".75" stopColor="#1e4468" /><stop offset="1" stopColor="#9db8cc" /></radialGradient>
          </defs>
          <circle cx="19" cy="19" r="17.500" fill="url(#orb)" stroke="#2c4a66" />
          <path d="M3.500 15A16 16 0 0 1 34.500 15C27 20 12 13 3.500 15z" fill="#fff" opacity=".3" />
          <path d="M10 10.500c3-1.800 5-1.500 8-.3l-2 8c-3-1.200-5-1.200-8 .3z" fill="#ee6a33" />
          <path d="M19.500 10.800c3 1.200 6 1.200 9-.5l-2 8c-3 1.700-6 1.500-9 .3z" fill="#9bc53d" />
          <path d="M7.500 20c3-1.500 5-1.300 8-.2l-2 8c-3-1.300-5-1.200-8 .2z" fill="#4aa3e8" />
          <path d="M17 20.300c3 1.200 6 1.200 9-.4l-2 8c-3 1.600-6 1.500-9 .3z" fill="#fdcf3b" />
        </svg>
      </Slot>
      <Slot className="w-[67px] pl-[4px]">
        <svg width="31" height="31" viewBox="0 0 34 34" fill="none">
          <circle cx="18" cy="17" r="9.500" stroke="#1664b4" strokeWidth="6.500" />
          <circle cx="18" cy="15" r="8.500" stroke="#4ba3e6" strokeWidth="2" opacity=".7" />
          <path d="M10 17.500h20" stroke="#1f73c2" strokeWidth="4" />
          <path d="M20 22h11v-3z" fill="#b4cde6" stroke="#a4bfdb" strokeWidth="2" />
          <path d="M31 9c2-6-2-8-8-5C13 8 3 20 2 29c0 4 5 3 9-.5" stroke="#f2bf2c" strokeWidth="2.400" />
        </svg>
      </Slot>
      <TaskBtn cls={`w-[55px] ${LIGHT_BTN}`}>
        <svg width="34" height="32" viewBox="0 0 34 32">
          <path d="M2 3 12 2l2 3h17l2 3v18l-2 3H3z" fill="#f0d98a" stroke="#b79a4b" />
          <path d="M5 1h8v3H5z" fill="#fff" /><path d="M5 1h3v2H5z" fill="#2c2" />
          <path d="M13 3h9v3h-9z" fill="#fff" /><path d="M13 3h3v2h-3z" fill="#d33" />
          <path d="M21 5h9v3h-9z" fill="#fff" /><path d="M21 5h4v2h-4z" fill="#28c" />
          <path d="M2 9h30v18H3z" fill="#f8e9ab" stroke="#d8bd67" />
          <path d="M6 30V20c0-1 1-2 2-2h19c1 0 2 1 2 2v10h-5v-6H12v6z" fill="#a9dbf3" stroke="#61a8cf" />
        </svg>
      </TaskBtn>
      <div className="h-[39px] w-[4px] rounded-r-[3px] border-y border-r border-[#56708f] bg-[#c8e0fa]" />
      <Slot className="h-[39px] w-[64px]">
        <svg width="28" height="27" viewBox="0 0 30 28">
          <path d="m19 2 7 1v21l-7 2zM16 1l7 1v23l-7 2z" fill="#7fc0e0" stroke="#3f8fb8" />
          <path d="M1 2h19v24H1z" fill="#9fd4ee" stroke="#4c94b8" />
          <circle cx="12" cy="14" r="9" fill="#f08222" stroke="#fff" strokeWidth=".7" />
          <path d="m8.500 8 9.500 6-9.500 6z" fill="#fff" />
        </svg>
      </Slot>
      <TaskBtn cls={`ml-px w-[60px] ${LIGHT_BTN}`}>
        <svg width="30" height="30" viewBox="0 0 30 30">
          <circle cx="15" cy="15" r="15" fill="#fcc934" />
          <path d="M15 15 2 7.500A15 15 0 0 1 28 7.500H15z" fill="#db4437" />
          <path d="M2 7.500A15 15 0 0 0 15 30l6.500-11.500L15 15z" fill="#1a9d58" />
          <path d="M15 7.500h13A15 15 0 0 1 15 30l6.500-11.500z" fill="#fcc934" />
          <circle cx="15" cy="15" r="7.200" fill="#fff" /><circle cx="15" cy="15" r="5.800" fill="#4285f4" />
        </svg>
      </TaskBtn>
      <TaskBtn cls={`ml-[2px] w-[60px] ${LIGHT_BTN}`}>
        <svg width="30" height="30" viewBox="0 0 30 30">
          <path d="M15 0a15 15 0 1 0 0 30 15 15 0 0 0 0-30zm0 3.500c4 0 6 5 6 11.500s-2 11.500-6 11.500S9 21.500 9 15s2-11.500 6-11.500z" fill="#e8192c" fillRule="evenodd" />
          <path d="M15 3.500C19 1 24 2 26 5c5 6 5 14 0 20-3 3-8 4-11 1.500 4 0 6-5 6-11.500S19 3.500 15 3.500z" fill="#b20f20" />
        </svg>
      </TaskBtn>
      <TaskBtn cls="ml-[2px] w-[59px] border-[#8e929a] bg-[linear-gradient(90deg,#e4f1ff_0%,#c5e0fc_45%,#4a5362_68%,#3a3d47_100%)]">
        <svg width="33" height="28" viewBox="0 0 33 28">
          <path d="m5 1 14 4-4 15L0 17z" fill="#abe0a4" stroke="#7fbf7a" />
          <path d="M8 6h14v16H8z" fill="#a9d5f3" stroke="#7fb0d4" />
          <path d="m13 8 15-4 4 15-15 5z" fill="#fae06a" stroke="#d9b83e" />
        </svg>
      </TaskBtn>
      <TaskBtn cls={`ml-[4px] w-[58px] ${DARK_BTN}`}><OfficeIcon letter="V" color="#3955a3" kind="visio" /></TaskBtn>
      <TaskBtn cls={`ml-[4px] w-[58px] ${DARK_BTN}`}><OfficeIcon letter="W" color="#2b579a" kind="word" /></TaskBtn>
      <TaskBtn cls={`ml-[4px] w-[58px] ${DARK_BTN}`}>
        <svg width="30" height="26" viewBox="0 0 30 26">
          <path d="M0 0h8v3H3v5H0zM22 0h8v8h-3V3h-5zM0 18h3v5h5v3H0zM27 18h3v8h-8v-3h5z" fill="#2f8fdc" />
          <path d="M2 2h26v22H2z" fill="#f4f8fb" />
          <path d="M4 4h22v9H4z" fill="#8fcdf6" />
          <path d="M16 5c4-1 8 0 10 2v5h-8c-3-1-4-4-2-7z" fill="#e3f3fd" />
          <path d="M4 8c4-1 7 2 10 4l6 2H4z" fill="#3e8a4a" />
          <path d="M4 14h22v8H4z" fill="#3e8ab5" /><path d="M4 20c6-3 14-2 22-4v6H4z" fill="#8cc3dc" />
        </svg>
      </TaskBtn>
      <TaskBtn cls="ml-[4px] w-[58px] border-[#d5d6da] bg-gradient-to-b from-[#b5b7bb] via-[#777980] to-[#8d8f96]"><OfficeIcon letter="X" color="#217346" kind="excel" /></TaskBtn>
      <TaskBtn cls={`ml-[4px] w-[58px] ${DARK_BTN}`}>
        <svg width="33" height="32" viewBox="0 0 33 32">
          <path d="M14 5C5 5 0 12 1 18s5 9 7 8 0-5 3-5 3 6 8 6c6 0 11-5 10-12S22 5 14 5z" fill="#c9e4f4" stroke="#8db8d2" />
          <circle cx="6" cy="17" r="2.500" fill="#dd4b39" /><circle cx="11" cy="12" r="2.500" fill="#4caf50" /><circle cx="18" cy="9.500" r="2.500" fill="#f3b52f" /><circle cx="14" cy="19" r="2" fill="#1f2f45" />
          <path d="m24 9 3 1-9 21-2-1z" fill="#e07e2c" /><path d="m24 9-1-6 5-3 4 3-3 7z" fill="#cfa678" />
        </svg>
      </TaskBtn>
      <div className="ml-[425px] flex h-[39px] items-center">
        <svg width="11" height="6" viewBox="0 0 11 6"><path d="M5.500 .5 10 5.500H1z" fill="#fff" stroke="#5a6f88" strokeWidth=".6" /></svg>
        <svg width="18" height="18" viewBox="0 0 18 18" className="ml-[11px]">
          <path d="M1.500 1v15" stroke="#3c4c60" strokeWidth="3" /><path d="M1.500 1.500v14" stroke="#fff" strokeWidth="1.500" />
          <path d="M3 2h6l1 1h5v7H9L8 9H3z" fill="#fff" stroke="#4b5c70" strokeWidth=".7" />
          <circle cx="11.500" cy="12" r="5" fill="#d8352a" stroke="#fff" strokeWidth=".6" /><path d="m9.500 10 4 4M13.500 10l-4 4" stroke="#fff" strokeWidth="1.600" />
        </svg>
        <svg width="11" height="16" viewBox="0 0 11 16" className="ml-[8px]"><path d="M3.500 .5h4v1.500h2v13.500h-8V2h2z" fill="#fff" stroke="#3c4c60" /><path d="M3 8h5v6H3z" fill="#4b5c70" /></svg>
        <svg width="18" height="17" viewBox="0 0 18 17" className="ml-[10px]">
          <path d="M1 11h2v3H1zM4 9h2v5H4zM7 6h2v8H7zM10 4h2v10h-2zM13 1h2v13h-2z" fill="#b8c2cd" stroke="#4b5c70" strokeWidth=".8" />
          <path d="m8 7 8 8M16 7l-8 8" stroke="#d8161b" strokeWidth="2.200" />
        </svg>
        <svg width="17" height="16" viewBox="0 0 17 16" className="ml-[6px]" fill="none">
          <path d="M1 5h3l4-4v14l-4-4H1z" fill="#fff" stroke="#4b5c70" strokeWidth=".8" />
          <path d="M10 5.500c1.200 1.500 1.200 3.500 0 5M12 3.500c2.200 2.500 2.200 6.500 0 9M14 2c3 3.500 3 8.500 0 12" stroke="#fff" />
        </svg>
      </div>
      <div className="ml-auto flex h-[39px] w-[62px] flex-col items-center pr-[3px] pt-[3px] leading-[17px]">
        <Fit w={43}>2:33 PM</Fit>
        <Fit w={53}>1/30/2017</Fit>
      </div>
      <div className="ml-[4px] h-[39px] w-[14px] border border-[#46607c] bg-gradient-to-b from-[#a9bfd7] via-[#6f8fb0] to-[#a9ccec]" />
    </div>
  );
}

export default function App() {
  return (
    <div className="flex h-[768px] w-[1366px] flex-col overflow-hidden bg-white font-['Open_Sans','Noto_Sans',sans-serif] text-[12px] leading-none">
      <TitleBar />
      <Tabs />
      <Ribbon />
      <FormulaBar />
      <div className="flex h-[490px] shrink-0">
        <Sheet />
        <VScroll />
      </div>
      <SheetTabs />
      <StatusBar />
      <Taskbar />
    </div>
  );
}
